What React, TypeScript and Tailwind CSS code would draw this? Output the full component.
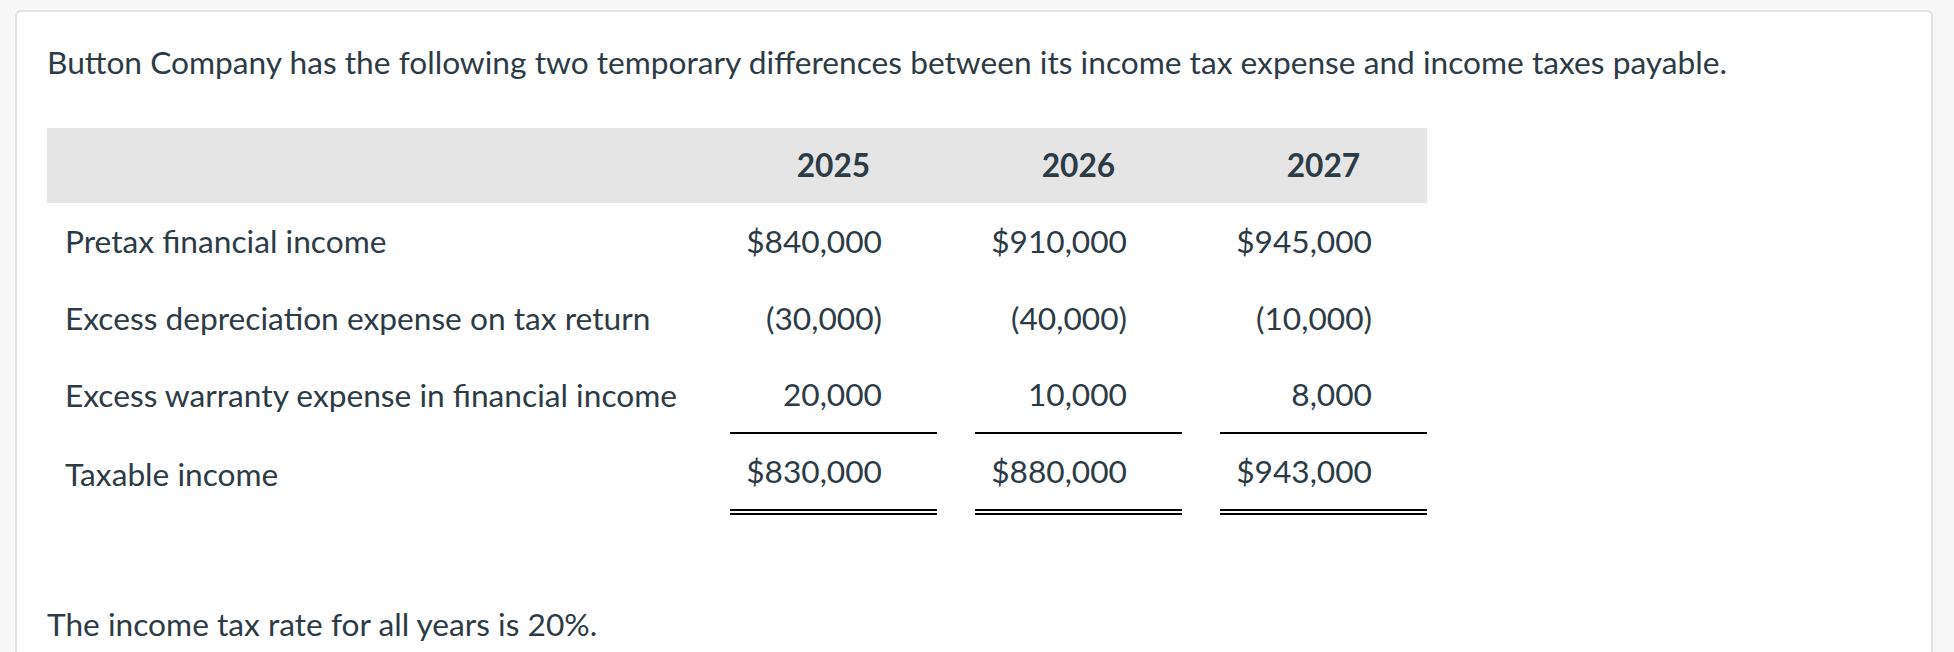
import React from "react";

const rows = [
  { label: "Pretax financial income", values: ["$840,000", "$910,000", "$945,000"], border: "" },
  { label: "Excess depreciation expense on tax return", values: ["(30,000)", "(40,000)", "(10,000)"], border: "" },
  { label: "Excess warranty expense in financial income", values: ["20,000", "10,000", "8,000"], border: "single" },
  { label: "Taxable income", values: ["$830,000", "$880,000", "$943,000"], border: "double" },
];

export default function App() {
  return (
    <div className="h-[652px] w-[1954px] overflow-hidden bg-[#f7f7f7] pl-[15px] pt-[10px]" style={{ fontFamily: "Lato, 'Open Sans', sans-serif" }}>
      <div className="h-[700px] w-[1918px] rounded-t-md border-2 border-[#e2e2e2] bg-white pl-[30px] pt-[33px] text-[31.7px] text-[#2d3b45]">
        <p className="leading-[34px]">
          Button Company has the following two temporary differences between its income tax expense and income taxes payable.
        </p>
        <div className="mt-[49px] w-[1380px]">
          <div className="grid h-[75px] grid-cols-[645px_207px_207px_207px] gap-x-[38px] bg-[#e5e5e5] font-bold">
            <div />
            {["2025", "2026", "2027"].map((y) => (
              <div key={y} className="flex items-center justify-center">
                {y}
              </div>
            ))}
          </div>
          {rows.map((r) => (
            <div
              key={r.label}
              className={
                "grid grid-cols-[645px_207px_207px_207px] gap-x-[38px] " +
                (r.border === "double" ? "h-[81px]" : "h-[77px]")
              }
            >
              <div className="flex items-center whitespace-nowrap pl-[18px]">{r.label}</div>
              {r.values.map((v, i) => (
                <div
                  key={i}
                  className={
                    "flex items-center justify-end pr-[55px] " +
                    (r.border === "single"
                      ? "border-b-2 border-black"
                      : r.border === "double"
                      ? "border-b-[6px] border-double border-black"
                      : "")
                  }
                >
                  {v}
                </div>
              ))}
            </div>
          ))}
        </div>
        <p className="mt-[92px] leading-[34px]">The income tax rate for all years is 20%.</p>
      </div>
    </div>
  );
}
